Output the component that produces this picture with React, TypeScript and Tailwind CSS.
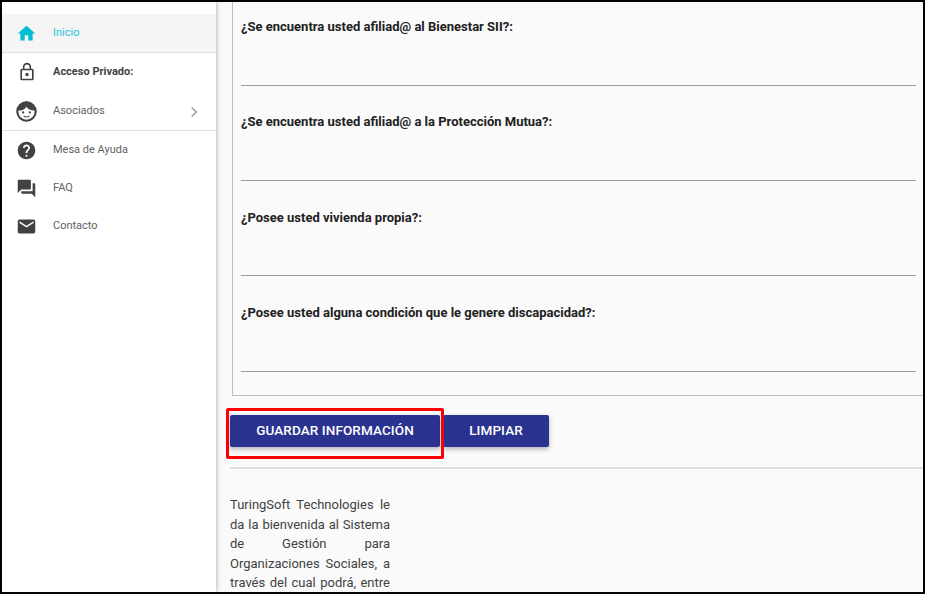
const font = { fontFamily: "Roboto, sans-serif" };

function MdIcon({ d, className }: { d: string; className: string }) {
  return (
    <svg viewBox="0 0 24 24" className={className} fill="currentColor">
      <path d={d} />
    </svg>
  );
}

const FaceIcon = () => (
  <svg viewBox="0 0 24 24" className="w-[23px] h-[23px] text-[#424242]">
    <circle cx="12" cy="12" r="9.6" fill="#fff" stroke="currentColor" strokeWidth="2.2" />
    <path d="M3 11c3.5.4 7-.8 9-4 1.6 2.8 5 4.2 9 4 0-5-4-9.500-9-9.500S3 6 3 11z" fill="currentColor" />
    <circle cx="8.500" cy="13" r="1.200" fill="currentColor" />
    <circle cx="15.500" cy="13" r="1.200" fill="currentColor" />
    <path d="M9 16.500c1.800 1.400 4.200 1.400 6 0" fill="none" stroke="currentColor" strokeWidth="1.100" />
  </svg>
);

const icons = {
  home: "M10 20v-6h4v6h5v-8h3L12 3 2 12h3v8z",
  lock: "M12 17c1.100 0 2-.9 2-2s-.9-2-2-2-2 .9-2 2 .9 2 2 2zm6-9h-1V6c0-2.760-2.240-5-5-5S7 3.240 7 6v2H6c-1.100 0-2 .9-2 2v10c0 1.100.9 2 2 2h12c1.100 0 2-.9 2-2V10c0-1.100-.9-2-2-2zM8.900 6c0-1.710 1.390-3.100 3.100-3.100s3.100 1.390 3.100 3.100v2H8.900V6zM18 20H6V10h12v10z",
  help: "M12 2C6.480 2 2 6.480 2 12s4.480 10 10 10 10-4.480 10-10S17.520 2 12 2zm1 17h-2v-2h2v2zm2.070-7.750l-.9.920C13.450 12.900 13 13.500 13 15h-2v-.5c0-1.100.450-2.100 1.170-2.830l1.240-1.260c.370-.360.590-.860.590-1.410 0-1.100-.9-2-2-2s-2 .9-2 2H8c0-2.210 1.790-4 4-4s4 1.790 4 4c0 .880-.360 1.680-.930 2.250z",
  forum: "M21 6h-2v9H6v2c0 .550.450 1 1 1h11l4 4V7c0-.550-.450-1-1-1zm-4 6V3c0-.550-.450-1-1-1H3c-.550 0-1 .450-1 1v14l4-4h10c.550 0 1-.450 1-1z",
  mail: "M20 4H4c-1.100 0-1.990.9-1.990 2L2 18c0 1.100.9 2 2 2h16c1.100 0 2-.9 2-2V6c0-1.100-.9-2-2-2zm0 4l-8 5-8-5V6l8 5 8-5v2z",
};

function NavItem({ icon, label, className = "", labelClass = "text-[#616161]", children }: any) {
  return (
    <div className={`flex items-center pl-[12px] pr-[15px] ${className}`}>
      <div className="w-[25px] h-[24px] shrink-0 flex items-center justify-center">{icon}</div>
      <span className={`ml-[14px] text-[11px] flex-1 ${labelClass}`}>{label}</span>
      {children}
    </div>
  );
}

const questions = [
  { text: "¿Se encuentra usted afiliad@ al Bienestar SII?:", box: "h-[84px] pt-[16px]" },
  { text: "¿Se encuentra usted afiliad@ a la Protección Mutua?:", box: "h-[95px] pt-[27px]" },
  { text: "¿Posee usted vivienda propia?:", box: "h-[95px] pt-[28px]" },
  { text: "¿Posee usted alguna condición que le genere discapacidad?:", box: "h-[96px] pt-[28px]" },
];

export default function App() {
  return (
    <div className="relative w-[925px] h-[594px] border-2 border-black bg-[#fafafa] overflow-hidden flex" style={font}>
      <aside className="w-[214px] shrink-0 bg-white pt-[12px] shadow-[1px_0_4px_rgba(0,0,0,0.25)] z-10 relative">
        <NavItem
          className="bg-[#f5f5f5] border-b border-[#e0e0e0] h-[39px]"
          labelClass="text-[#26c6da]"
          label="Inicio"
          icon={<MdIcon d={icons.home} className="w-[21px] h-[21px] text-[#00bcd4]" />}
        />
        <NavItem
          className="h-[38px]"
          labelClass="text-[#424242] font-bold"
          label="Acceso Privado:"
          icon={<MdIcon d={icons.lock} className="w-[20px] h-[20px] text-[#424242]" />}
        />
        <NavItem className="border-b border-[#e0e0e0] h-[40px] pt-[2px]" label="Asociados" icon={<FaceIcon />}>
          <svg viewBox="0 0 24 24" className="w-[14px] h-[14px] text-[#8a8a8a]" fill="none" stroke="currentColor" strokeWidth="2">
            <path d="M8 4l8 8-8 8" />
          </svg>
        </NavItem>
        <NavItem className="h-[38px]" label="Mesa de Ayuda" icon={<MdIcon d={icons.help} className="w-[21px] h-[21px] text-[#424242]" />} />
        <NavItem className="h-[38px]" label="FAQ" icon={<MdIcon d={icons.forum} className="w-[21px] h-[21px] text-[#424242]" />} />
        <NavItem className="h-[38px]" label="Contacto" icon={<MdIcon d={icons.mail} className="w-[21px] h-[21px] text-[#424242]" />} />
      </aside>

      <main className="flex-1 min-w-0 pl-[14px]">
        <section className="ml-[2px] border-l border-b border-[#bdbdbd] h-[394px] pl-[8px] pr-[7px]">
          {questions.map((q) => (
            <div key={q.text} className={`${q.box} border-b border-[#9e9e9e]`}>
              <label className="block text-[13px] leading-[18px] font-bold text-[#212121]">{q.text}</label>
            </div>
          ))}
        </section>

        <div className="flex mt-[19px]">
          <button className="w-[210px] h-[32px] pb-[2px] bg-[#2b3390] text-white text-[13.500px] font-medium rounded-[2px] shadow-[0_2px_5px_rgba(0,0,0,0.3)] tracking-[0.1px]">
            GUARDAR INFORMACIÓN
          </button>
          <button className="ml-[3px] w-[106px] h-[32px] pb-[2px] bg-[#2b3390] text-white text-[13.500px] font-medium rounded-[2px] shadow-[0_2px_5px_rgba(0,0,0,0.3)] tracking-[0.1px]">
            LIMPIAR
          </button>
        </div>

        <hr className="mt-[20px] border-t-2 border-[#e0e0e0]" />

        <p className="mt-[26px] w-[160px] text-[13px] leading-[19.500px] text-[#424242] text-justify">
          TuringSoft Technologies le da la bienvenida al Sistema de Gestión para Organizaciones Sociales, a través del cual podrá, entre otras cosas, gestionar su información personal y revisar sus datos.
        </p>
      </main>

      <div className="absolute left-[224px] top-[406px] w-[218px] h-[51px] border-[3px] border-[#ff0000] rounded-[2px]" />
    </div>
  );
}
